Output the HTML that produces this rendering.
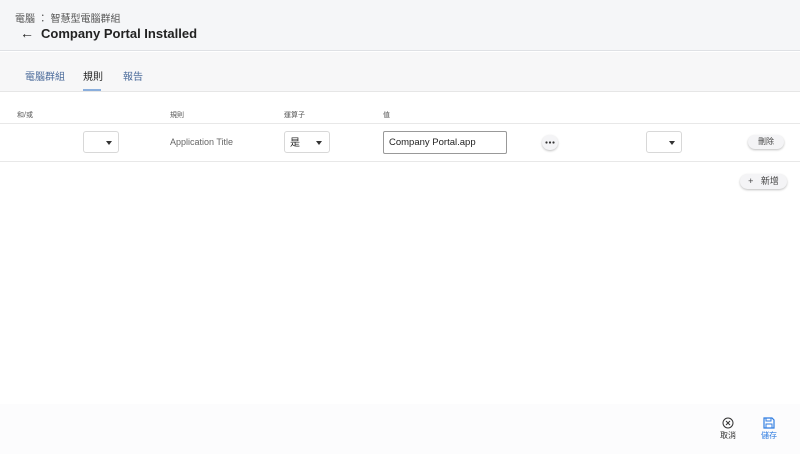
<!DOCTYPE html>
<html><head><meta charset="utf-8"><style>
*{box-sizing:border-box;margin:0;padding:0}
body{width:800px;height:454px;background:#fff;font-family:"Liberation Sans","Noto Sans CJK TC",sans-serif;position:relative;overflow:hidden;color:#333}
.hdr{position:absolute;left:0;top:0;width:800px;height:51px;background:#f5f6f8;border-bottom:1px solid #dfe1e5}
.tabs{position:absolute;left:0;top:52px;width:800px;height:40px;background:#f7f7f8;border-bottom:1px solid #e6e6e6}
.a{position:absolute;white-space:nowrap}
.sel{position:absolute;border:1px solid #d8d8d8;border-radius:3px;background:#fff;height:22px}
.tri{position:absolute;width:0;height:0;border-left:3px solid transparent;border-right:3px solid transparent;border-top:4px solid #333;top:9px}
.pill{position:absolute;background:#f4f4f6;border-radius:10px;box-shadow:0 1px 2px rgba(0,0,0,.25);font-size:9px;color:#444;text-align:center}
</style></head><body>
<div class="hdr"></div>
<div class="a" style="left:15px;top:10px;font-size:10px;color:#555">電腦 ： 智慧型電腦群組</div>
<div class="a" style="left:20px;top:25px;font-size:14px;color:#222">←</div>
<div class="a" style="left:41px;top:26px;font-size:13px;font-weight:bold;color:#222">Company Portal Installed</div>
<div class="tabs"></div>
<div class="a" style="left:25px;top:68px;font-size:10px;color:#4a6a9a">電腦群組</div>
<div class="a" style="left:83px;top:68px;font-size:10px;color:#222">規則</div>
<div class="a" style="left:83px;top:89px;width:18px;height:2px;background:#8aaedc"></div>
<div class="a" style="left:123px;top:68px;font-size:10px;color:#4a6a9a">報告</div>
<div class="a" style="left:17px;top:110px;font-size:7px;color:#555">和/或</div>
<div class="a" style="left:170px;top:110px;font-size:7px;color:#555">規則</div>
<div class="a" style="left:284px;top:110px;font-size:7px;color:#555">運算子</div>
<div class="a" style="left:383px;top:110px;font-size:7px;color:#555">值</div>
<div class="a" style="left:0;top:123px;width:800px;height:1px;background:#e8e8e8"></div>
<div class="a" style="left:0;top:161px;width:800px;height:1px;background:#e8e8e8"></div>
<div class="sel" style="left:83px;top:131px;width:36px"><div class="tri" style="left:22px"></div></div>
<div class="a" style="left:170px;top:137px;font-size:9px;color:#666">Application Title</div>
<div class="sel" style="left:284px;top:131px;width:46px"><span class="a" style="left:5px;top:2px;font-size:10px;color:#222">是</span><div class="tri" style="left:31px"></div></div>
<div class="a" style="left:383px;top:131px;width:124px;height:23px;border:1px solid #999;border-radius:2px"><span class="a" style="left:5px;top:5px;font-size:9.5px;color:#222">Company Portal.app</span></div>
<div class="pill" style="left:542px;top:135px;width:16px;height:15px;border-radius:8px"><svg class="a" style="left:3px;top:6px" width="10" height="3"><circle cx="1.5" cy="1.5" r="1.1" fill="#333"/><circle cx="5" cy="1.5" r="1.1" fill="#333"/><circle cx="8.5" cy="1.5" r="1.1" fill="#333"/></svg></div>
<div class="sel" style="left:646px;top:131px;width:36px"><div class="tri" style="left:22px"></div></div>
<div class="pill" style="left:748px;top:135px;width:36px;height:14px;line-height:14px;font-size:8px">刪除</div>
<div class="pill" style="left:740px;top:174px;width:47px;height:15px;line-height:15px;font-size:9px">+ &nbsp; 新增</div>
<div class="a" style="left:0;top:404px;width:800px;height:50px;background:#fcfcfd"></div>
<svg class="a" style="left:722px;top:417px" width="12" height="12" viewBox="0 0 12 12"><circle cx="6" cy="6" r="5" fill="none" stroke="#333" stroke-width="1"/><path d="M4 4L8 8M8 4L4 8" stroke="#333" stroke-width="1"/></svg>
<div class="a" style="left:720px;top:430px;font-size:8px;color:#333">取消</div>
<svg class="a" style="left:763px;top:417px" width="12" height="12" viewBox="0 0 12 12"><path d="M1 1H9L11 3V11H1Z" fill="none" stroke="#2f7de1" stroke-width="1.2"/><rect x="3" y="1" width="5" height="3" fill="none" stroke="#2f7de1"/><rect x="3" y="7" width="6" height="4" fill="none" stroke="#2f7de1"/></svg>
<div class="a" style="left:761px;top:430px;font-size:8px;color:#2f7de1">儲存</div>
</body></html>
